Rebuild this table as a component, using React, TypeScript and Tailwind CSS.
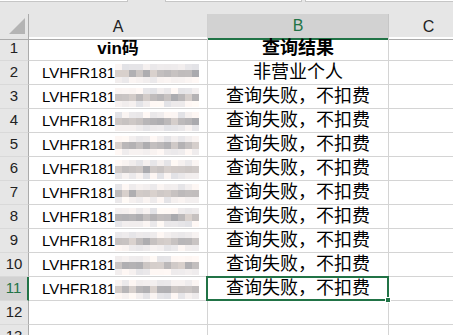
import React from "react";

const LATIN = '"Liberation Sans", Arial, sans-serif';
const CJK = '"Liberation Sans", "Noto Sans CJK SC", sans-serif';

// deterministic shades for the pixelated (obscured) part of each VIN
function shade(seed: number, band: number): string {
  const x = Math.sin(seed * 12.9898 + band * 78.233) * 43758.5453;
  const r = x - Math.floor(x);
  const base = band === 1 ? 172 : 228;
  const spread = band === 1 ? 40 : 24;
  const v = Math.round(base + r * spread);
  const tint = Math.round(r * 8);
  return `rgb(${v - 2 + tint}, ${v - 2}, ${v + 2 - tint})`;
}

function Mosaic({ row }: { row: number }) {
  const bands = [0, 1, 2];
  const heights = ["h-[6px]", "h-[7px]", "h-[6px]"];
  return (
    <div className="flex flex-col blur-[0.6px]">
      {bands.map((b) => (
        <div key={b} className={`flex ${heights[b]}`}>
          {Array.from({ length: 12 }).map((_, i) => (
            <div
              key={i}
              className="h-full w-[7px]"
              style={{ backgroundColor: shade(row * 31 + i, b) }}
            />
          ))}
        </div>
      ))}
    </div>
  );
}

const results = [
  "非营业个人",
  "查询失败，不扣费",
  "查询失败，不扣费",
  "查询失败，不扣费",
  "查询失败，不扣费",
  "查询失败，不扣费",
  "查询失败，不扣费",
  "查询失败，不扣费",
  "查询失败，不扣费",
  "查询失败，不扣费",
];

const cols = "grid grid-cols-[29px_179px_181px_80px]";

function RowHeader({ n, selected }: { n: number; selected?: boolean }) {
  return (
    <div
      className={`flex h-[24px] items-center justify-center border-b border-b-[#d9d9d9] text-[15px] ${
        selected
          ? "border-r-2 border-r-[#217346] bg-[#d2d2d2] text-[#217346]"
          : "border-r border-r-[#ababab] bg-[#e6e6e6] text-[#222]"
      }`}
      style={{ fontFamily: LATIN }}
    >
      {n}
    </div>
  );
}

export default function App() {
  return (
    <div className="h-[335px] w-[453px] overflow-hidden bg-white">
      {/* strip under the formula bar */}
      <div className="flex h-[14px] items-start bg-[#e6e6e6]">
        <div className="h-[2px] w-[128px] border-b border-r border-[#c6c6c6] bg-white" />
        <div className="ml-[37px] h-[2px] w-[137px] border-b border-l border-r border-[#c6c6c6] bg-white" />
        <div className="ml-[3px] h-[2px] flex-1 border-b border-l border-[#c6c6c6] bg-white" />
      </div>

      {/* column headers */}
      <div className={`${cols} h-[23px] bg-[#e6e6e6] text-[16px] text-[#222]`} style={{ fontFamily: LATIN }}>
        <div className="relative border-b border-r border-[#ababab]">
          <svg className="absolute left-[9px] top-[4px]" width="16" height="16" viewBox="0 0 16 16">
            <polygon points="16,0 16,16 0,16" fill="#b4b4b4" />
          </svg>
        </div>
        <div className="flex items-center justify-center border-b border-r border-b-[#ababab] border-r-[#d0d0d0]">A</div>
        <div className="flex items-center justify-center border-b-2 border-r border-b-[#217346] border-r-[#c6c6c6] bg-[#d2d2d2] text-[#217346]">
          B
        </div>
        <div className="flex items-center justify-center border-b border-r border-b-[#ababab] border-r-[#d0d0d0]">C</div>
      </div>

      {/* row 1: titles */}
      <div className={cols}>
        <RowHeader n={1} />
        <div
          className="flex h-[24px] items-center justify-center border-b border-r border-[#d4d4d4] text-[17px] font-bold text-black"
          style={{ fontFamily: CJK }}
        >
          vin码
        </div>
        <div
          className="flex h-[24px] items-center justify-center border-b border-r border-[#d4d4d4] text-[18px] font-bold text-black"
          style={{ fontFamily: CJK }}
        >
          查询结果
        </div>
        <div className="h-[24px] border-b border-r border-[#d4d4d4]" />
      </div>

      {results.map((r, i) => {
        const n = i + 2;
        const selected = n === 11;
        return (
          <div key={n} className={cols}>
            <RowHeader n={n} selected={selected} />
            <div className="flex h-[24px] items-center border-b border-r border-[#d4d4d4] pl-[13px]">
              <span className="text-[15px] leading-none text-black" style={{ fontFamily: LATIN }}>
                LVHFR181
              </span>
              <div className="mt-[1px]">
                <Mosaic row={n} />
              </div>
            </div>
            <div
              className="relative flex h-[24px] items-center justify-center border-b border-r border-[#d4d4d4] text-[18px] text-black"
              style={{ fontFamily: CJK }}
            >
              {r}
              {selected && (
                <div className="pointer-events-none absolute -left-[2px] -top-[1px] h-[25px] w-[183px] border-2 border-[#217346]">
                  <div className="absolute -bottom-[4px] -right-[4px] h-[6px] w-[6px] border border-white bg-[#217346]" />
                </div>
              )}
            </div>
            <div className="h-[24px] border-b border-r border-[#d4d4d4]" />
          </div>
        );
      })}

      {[12, 13].map((n) => (
        <div key={n} className={cols}>
          <RowHeader n={n} />
          <div className="h-[24px] border-b border-r border-[#d4d4d4]" />
          <div className="h-[24px] border-b border-r border-[#d4d4d4]" />
          <div className="h-[24px] border-b border-r border-[#d4d4d4]" />
        </div>
      ))}
    </div>
  );
}
